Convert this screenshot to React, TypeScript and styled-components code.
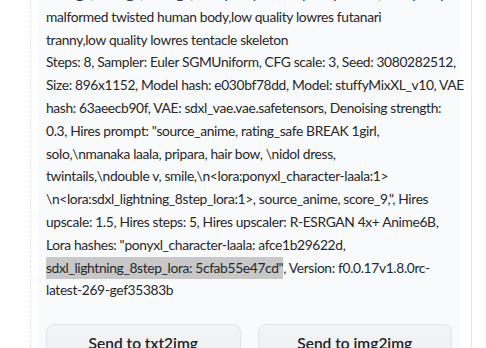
import styled, { createGlobalStyle } from 'styled-components';

const GlobalStyle = createGlobalStyle`
  html, body {
    margin: 0;
    padding: 0;
    background: #ffffff;
    overflow: hidden;
  }
`;

const Page = styled.div`
  display: flex;
  height: 348px;
  padding-left: 30px;
  overflow: hidden;
  font-family: Lato, "Liberation Sans", sans-serif;
`;

const Column = styled.div`
  display: flex;
  border-left: 1px dashed #e3e4e8;
  padding-left: 7px;
`;

const Panel = styled.div`
  width: 422px;
  box-sizing: border-box;
  padding: 0 8px;
  background: #f9fafb;
  display: flex;
  flex-direction: column;
`;

const Info = styled.div`
  margin-top: -17px;
  font-size: 13.8px;
  letter-spacing: -0.35px;
  line-height: 22.8px;
  color: #27272a;
`;

const Line = styled.div`
  white-space: nowrap;
  height: 22.8px;
`;

const Selected = styled.span`
  display: inline-block;
  background: #c8c8c8;
  height: 22.8px;
  vertical-align: top;
`;

const Buttons = styled.div`
  display: grid;
  grid-template-columns: 1fr 1fr;
  gap: 17px;
  margin-top: 22px;
`;

const Button = styled.button`
  height: 44px;
  border: 1px solid #e4e5e9;
  border-radius: 8px;
  background: linear-gradient(to bottom, #f3f4f6, #eceef1);
  color: #1f2328;
  font-family: Lato, "Liberation Sans", sans-serif;
  font-size: 15.5px;
  font-weight: 600;
  padding: 0 0 6px;
`;

const Side = styled.div`
  margin-left: 11px;
  width: 20px;
  border-left: 1px solid #e6e7eb;
`;

const lines = [
  'score_4, score_5, score_6, low quality lowres poorly drawn, low quality lowres',
  'malformed twisted human body,low quality lowres futanari',
  'tranny,low quality lowres tentacle skeleton',
  'Steps: 8, Sampler: Euler SGMUniform, CFG scale: 3, Seed: 3080282512,',
  'Size: 896x1152, Model hash: e030bf78dd, Model: stuffyMixXL_v10, VAE',
  'hash: 63aeecb90f, VAE: sdxl_vae.vae.safetensors, Denoising strength:',
  '0.3, Hires prompt: "source_anime, rating_safe BREAK 1girl,',
  'solo,\\nmanaka laala, pripara, hair bow, \\nidol dress,',
  'twintails,\\ndouble v, smile,\\n<lora:ponyxl_character-laala:1>',
  '\\n<lora:sdxl_lightning_8step_lora:1>, source_anime, score_9,", Hires',
  'upscale: 1.5, Hires steps: 5, Hires upscaler: R-ESRGAN 4x+ Anime6B,',
  'Lora hashes: "ponyxl_character-laala: afce1b29622d,',
];

export default function App() {
  return (
    <>
      <GlobalStyle />
      <Page>
        <Column>
          <Panel>
            <Info>
              {lines.map((text, i) => (
                <Line key={i}>{text}</Line>
              ))}
              <Line>
                <Selected>sdxl_lightning_8step_lora: 5cfab55e47cd"</Selected>
                , Version: f0.0.17v1.8.0rc-
              </Line>
              <Line>latest-269-gef35383b</Line>
            </Info>
            <Buttons>
              <Button>Send to txt2img</Button>
              <Button>Send to img2img</Button>
            </Buttons>
          </Panel>
        </Column>
        <Side />
      </Page>
    </>
  );
}
